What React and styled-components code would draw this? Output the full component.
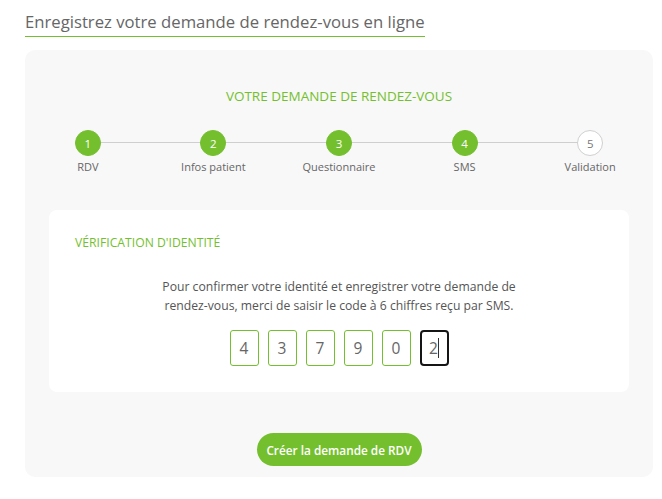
import React from "react";
import styled, { createGlobalStyle } from "styled-components";

const GREEN = "#74bf2e";

const Global = createGlobalStyle`
  html, body { margin: 0; padding: 0; background: #fff; }
  body { font-family: "Open Sans", "Noto Sans", sans-serif; color: #666; }
  * { box-sizing: border-box; }
`;

const Page = styled.div`
  width: 662px;
  padding: 10px 9px 0 25px;
`;

const TitleWrap = styled.div`
  display: flex;
`;

const Title = styled.h1`
  margin: 0;
  font-size: 16.7px;
  line-height: 23px;
  font-weight: 400;
  color: #666;
  padding-bottom: 3px;
  border-bottom: 1px solid ${GREEN};
`;

const Panel = styled.section`
  margin-top: 13px;
  width: 628px;
  height: 427px;
  background: #f8f8f8;
  border-radius: 10px;
  padding: 37px 0 0;
  display: flex;
  flex-direction: column;
  align-items: center;
`;

const Heading = styled.h2`
  margin: 0;
  font-size: 13.5px;
  line-height: 19px;
  font-weight: 400;
  color: ${GREEN};
  text-transform: uppercase;
`;

const Steps = styled.ol`
  list-style: none;
  margin: 24px 0 0;
  padding: 0;
  width: 100%;
  display: grid;
  grid-template-columns: repeat(5, 1fr);
`;

const Step = styled.li`
  position: relative;
  display: flex;
  flex-direction: column;
  align-items: center;
  &:not(:first-child)::before {
    content: "";
    position: absolute;
    top: 12px;
    right: 50%;
    width: 100%;
    height: 1px;
    background: #cfcfcf;
  }
`;

const Dot = styled.span`
  position: relative;
  z-index: 1;
  width: 26px;
  height: 26px;
  border-radius: 50%;
  display: flex;
  align-items: center;
  justify-content: center;
  font-size: 11.5px;
  background: ${(p) => (p.$done ? GREEN : "#fff")};
  color: ${(p) => (p.$done ? "#fff" : "#777")};
  border: 1px solid ${(p) => (p.$done ? GREEN : "#d0d0d0")};
`;

const StepLabel = styled.span`
  margin-top: 3px;
  font-size: 11px;
  line-height: 16px;
  color: #666;
`;

const Card = styled.div`
  margin-top: 35px;
  width: 580px;
  background: #fff;
  border-radius: 8px;
  padding: 24px 26px 26px;
  display: flex;
  flex-direction: column;
`;

const CardTitle = styled.h3`
  margin: 0;
  font-size: 12.2px;
  line-height: 18px;
  font-weight: 400;
  color: ${GREEN};
`;

const Text = styled.p`
  margin: 25px 0 0;
  font-size: 12.2px;
  line-height: 19px;
  color: #555;
  text-align: center;
`;

const Codes = styled.div`
  margin-top: 15px;
  display: flex;
  justify-content: center;
  gap: 9px;
`;

const CodeBox = styled.div`
  width: 29px;
  height: 36px;
  border-radius: ${(p) => (p.$focus ? "4px" : "3px")};
  border: ${(p) => (p.$focus ? "2px solid #151515" : `1px solid ${GREEN}`)};
  display: flex;
  align-items: center;
  justify-content: center;
  font-size: 15.5px;
  color: #666;
`;

const Caret = styled.span`
  display: inline-block;
  width: 1px;
  height: 20px;
  background: #333;
`;

const Button = styled.button`
  margin-top: 41px;
  width: 165px;
  height: 33px;
  border: 0;
  border-radius: 17px;
  background: ${GREEN};
  color: #fff;
  font-family: "Open Sans", "Noto Sans", sans-serif;
  font-size: 11.8px;
  font-weight: 600;
  white-space: nowrap;
  padding: 0;
  cursor: pointer;
`;

const steps = [
  { n: 1, label: "RDV", done: true },
  { n: 2, label: "Infos patient", done: true },
  { n: 3, label: "Questionnaire", done: true },
  { n: 4, label: "SMS", done: true },
  { n: 5, label: "Validation", done: false },
];

const digits = ["4", "3", "7", "9", "0", "2"];

export default function App() {
  return (
    <Page>
      <Global />
      <TitleWrap>
        <Title>Enregistrez votre demande de rendez-vous en ligne</Title>
      </TitleWrap>
      <Panel>
        <Heading>Votre demande de rendez-vous</Heading>
        <Steps>
          {steps.map((s) => (
            <Step key={s.n}>
              <Dot $done={s.done}>{s.n}</Dot>
              <StepLabel>{s.label}</StepLabel>
            </Step>
          ))}
        </Steps>
        <Card>
          <CardTitle>VÉRIFICATION D'IDENTITÉ</CardTitle>
          <Text>
            Pour confirmer votre identité et enregistrer votre demande de
            <br />
            rendez-vous, merci de saisir le code à 6 chiffres reçu par SMS.
          </Text>
          <Codes>
            {digits.map((d, i) => (
              <CodeBox key={i} $focus={i === digits.length - 1}>
                {d}
                {i === digits.length - 1 && <Caret />}
              </CodeBox>
            ))}
          </Codes>
        </Card>
        <Button>Créer la demande de RDV</Button>
      </Panel>
    </Page>
  );
}
